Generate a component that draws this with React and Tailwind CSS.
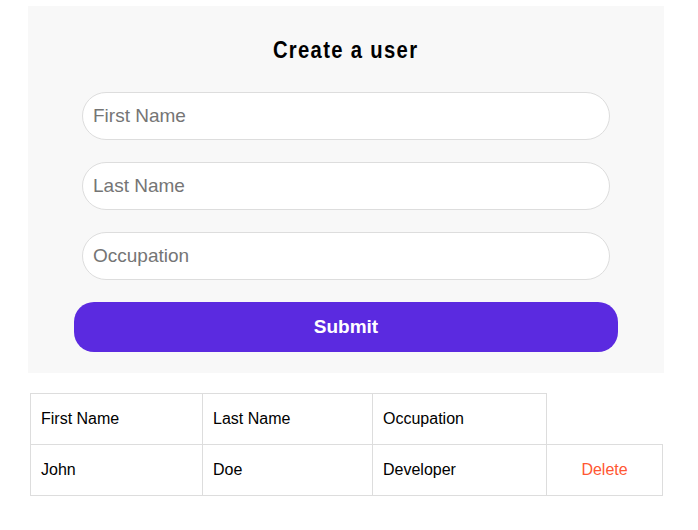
import { useState } from 'react';

const fields = [
  { key: 'firstName', label: 'First Name' },
  { key: 'lastName', label: 'Last Name' },
  { key: 'occupation', label: 'Occupation' },
];

export default function App() {
  const [form, setForm] = useState({ firstName: '', lastName: '', occupation: '' });
  const [users, setUsers] = useState([
    { firstName: 'John', lastName: 'Doe', occupation: 'Developer' },
  ]);

  const handleSubmit = (e) => {
    e.preventDefault();
    if (!form.firstName) return;
    setUsers([...users, form]);
    setForm({ firstName: '', lastName: '', occupation: '' });
  };

  return (
    <div className="min-h-[530px] bg-white pt-[6px] font-['Liberation_Sans',Arial,sans-serif]">
      <form onSubmit={handleSubmit} className="mx-[28px] w-[636px] bg-[#f8f8f8] pt-[33px] pb-[21px] flex flex-col items-center">
        <h2 className="text-[23px] font-bold leading-none tracking-[1.5px] scale-x-[0.88] text-black mb-[30px]">Create a user</h2>
        {fields.map(f => (
          <input
            key={f.key}
            value={form[f.key]}
            onChange={e => setForm({ ...form, [f.key]: e.target.value })}
            placeholder={f.label}
            className="w-[528px] h-[48px] mb-[22px] rounded-[24px] border border-[#dddddd] bg-white px-[10px] text-[19px] text-black placeholder:text-[#757575] outline-none"
          />
        ))}
        <button type="submit" className="w-[544px] h-[50px] rounded-[20px] bg-[#5b2ae0] text-white text-[19px] font-bold">
          Submit
        </button>
      </form>

      <table className="ml-[30px] mt-[20px] border-collapse text-[16px] text-black">
        <thead>
          <tr>
            <th className="w-[172px] h-[51px] border border-[#dddddd] px-[10px] text-left font-normal">First Name</th>
            <th className="w-[170px] h-[51px] border border-[#dddddd] px-[10px] text-left font-normal">Last Name</th>
            <th className="w-[174px] h-[51px] border border-[#dddddd] px-[10px] text-left font-normal">Occupation</th>
            <th className="w-[116px]"></th>
          </tr>
        </thead>
        <tbody>
          {users.map((u, i) => (
            <tr key={i}>
              <td className="h-[51px] border border-[#dddddd] px-[10px]">{u.firstName}</td>
              <td className="h-[51px] border border-[#dddddd] px-[10px]">{u.lastName}</td>
              <td className="h-[51px] border border-[#dddddd] px-[10px]">{u.occupation}</td>
              <td className="h-[51px] border border-[#dddddd] px-[10px] text-center">
                <button onClick={() => setUsers(users.filter((_, j) => j !== i))} className="text-[#ff5733]">Delete</button>
              </td>
            </tr>
          ))}
        </tbody>
      </table>
    </div>
  );
}
